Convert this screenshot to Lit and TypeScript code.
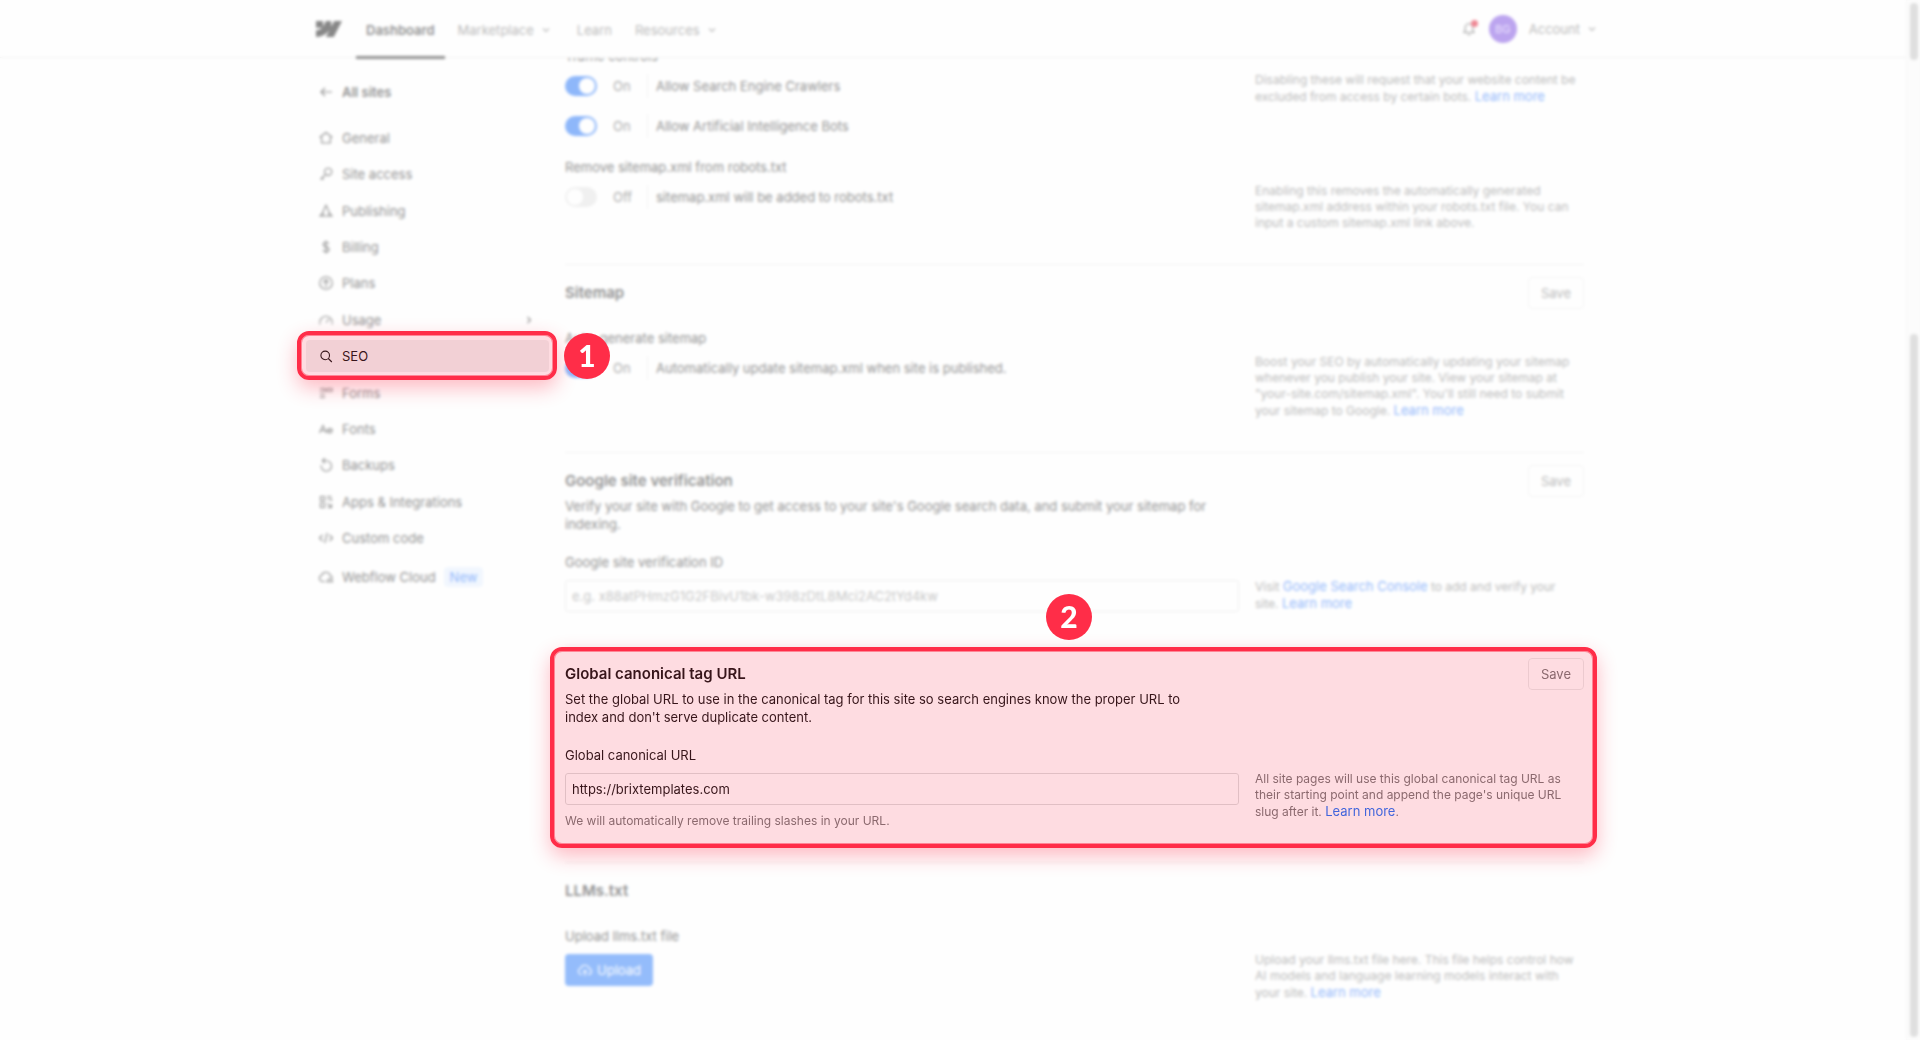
import { LitElement, html, css, svg, nothing } from "lit";
import { customElement, property } from "lit/decorators.js";
import { classMap } from "lit/directives/class-map.js";

const icons: Record<string, unknown> = {
  back: svg`<path d="M14 8H3M7 4 3 8l4 4"/>`,
  general: svg`<path d="M8 2.5 13.8 7 12.300 8V13H3.700V8L2.2 7Z"/>`,
  access: svg`<circle cx="10.2" cy="5.8" r="3.6"/><path d="M7.6 8.4 2.5 13.5M4 12l1.6 1.6"/>`,
  publishing: svg`<path d="M8 2.2 11 8.5V13H5V8.5ZM5 9.5 2 13h3M11 9.5 14 13h-3"/>`,
  billing: svg`<path d="M11 4.8C10.400 3.600 9.300 3.200 8 3.200 6.400 3.200 5.200 4 5.200 5.400 5.200 8.600 11 7 11 10.400 11 12 9.600 12.800 8 12.800 6.500 12.800 5.400 12.200 4.900 11M8 1.500v13"/>`,
  plans: svg`<circle cx="8" cy="8" r="6.300"/><path d="M8 12V5M5.300 7.600 8 4.800l2.700 2.800"/>`,
  usage: svg`<path d="M2 12.500A6.300 6.300 0 1 1 14 12.500M8 10.500 11 7"/>`,
  seo: svg`<circle cx="7.200" cy="7.400" r="4.300"/><path d="m10.300 10.500 3.500 3.500"/>`,
  forms: svg`<path d="M2 3.500h5M2 6.200h5V3.500M9 3.500h5v2.700H9ZM2 9.800h5M2 12.500h5"/>`,
  fonts: svg`<path d="M1.500 12 5 4.500 8.200 12M2.700 9.500h4.600M9.300 9.800h5c0-3-4.800-3-5 0 0 2.600 3.400 2.800 4.700 1.200"/>`,
  backups: svg`<path d="M3.200 8.200A5.200 5.200 0 1 0 8.200 3.800H4.500M7 1.200 4.400 3.800 7 6.400"/>`,
  apps: svg`<path d="M2.500 2.500h4v4h-4ZM9 2.500h4.500M9 5h4.500v2M2.500 9h4v4.500h-4ZM9.300 9.300l4.200 4.200M13.500 10V13.500H9.800"/>`,
  code: svg`<path d="M4.500 5 1.500 8l3 3M11.500 5l3 3-3 3M9.200 3 6.800 13"/>`,
  cloud: svg`<path d="M7 12.500H4.400A3.200 3.200 0 0 1 3.600 6.300 4.500 4.500 0 0 1 12.200 6.500 3.300 3.300 0 0 1 14.500 9.500M9 12.800l2-3h2l1.500 3Z"/>`,
  upload: svg`<path d="M5 12.500H4.400A3.200 3.200 0 0 1 3.600 6.300 4.500 4.500 0 0 1 12.200 6.500 3.100 3.100 0 0 1 11.800 12.500H11M8 14V8.500M6 10.300l2-2 2 2"/>`,
  down: svg`<path d="m5 6.500 3 3 3-3"/>`,
  right: svg`<path d="m6.500 5 3 3-3 3"/>`,
  bell: svg`<path d="M3 11.500h10L11.800 9.500V6.500A3.800 3.800 0 0 0 4.200 6.500V9.500ZM6.500 13.800h3"/>`,
};

const icon = (name: string) => html`<svg
  width="16"
  height="16"
  viewBox="0 0 16 16"
  fill="none"
  stroke="currentColor"
  stroke-width="1.100"
  aria-hidden="true"
>${icons[name]}</svg>`;

const shared = css`
  * {
    box-sizing: border-box;
  }
  a {
    color: inherit;
    text-decoration: none;
  }
  svg {
    display: block;
    flex: none;
  }
  .mark {
    position: absolute;
    border: 4px solid #ff2d48;
    border-radius: 12px;
    background: rgba(255, 45, 72, 0.16);
    box-shadow: 0 8px 20px rgba(255, 45, 72, 0.32), inset 0 0 0 1px rgba(255, 45, 72, 0.5);
    pointer-events: none;
    z-index: 3;
  }
  .badge {
    position: absolute;
    z-index: 4;
    display: grid;
    place-items: center;
    width: 46px;
    height: 46px;
    border-radius: 50%;
    background: #ff2d48;
    color: #fff;
    font: 900 30px/44px Lato, sans-serif;
    align-content: start;
  }
`;

@customElement("top-bar")
export class TopBar extends LitElement {
  static styles = [
    shared,
    css`
      :host {
        display: block;
        position: relative;
        z-index: 1;
        background: #fff;
        border-bottom: 1px solid #e4e4e4;
      }
      .bar {
        display: flex;
        align-items: center;
        height: 57px;
        max-width: 1294px;
        margin: 0 auto;
        padding-left: 10px;
        font-size: 13px;
        color: #757575;
      }
      .logo {
        margin-right: 14px;
        color: #111;
      }
      nav {
        display: flex;
        gap: 3px;
        height: 100%;
      }
      .link {
        display: flex;
        align-items: center;
        gap: 4px;
        height: 59px;
        padding: 0 10px;
      }
      .link.current {
        color: #222;
        font-weight: 600;
        border-bottom: 3px solid #222;
        padding-top: 3px;
      }
      .account {
        display: flex;
        align-items: center;
        gap: 12px;
        margin-left: auto;
      }
      .bell {
        position: relative;
        display: block;
        padding: 0;
        border: 0;
        background: none;
        color: #444;
      }
      .dot {
        position: absolute;
        top: -1px;
        right: -1px;
        width: 7px;
        height: 7px;
        border-radius: 50%;
        background: #e0122c;
      }
      .avatar {
        display: grid;
        place-items: center;
        width: 28px;
        height: 28px;
        border-radius: 50%;
        background: #7a4be0;
        color: #d9c8ff;
        font-size: 11px;
      }
      .menu {
        display: flex;
        align-items: center;
        gap: 4px;
        padding: 0;
        border: 0;
        background: none;
        color: inherit;
        font: inherit;
      }
    `,
  ];

  render() {
    return html`<header class="bar">
      <a class="logo" href="#" aria-label="Webflow">
        <svg width="26" height="26" viewBox="0 0 24 24" fill="currentColor">
          <path
            d="m24 4.515-7.658 14.970H9.149l3.205-6.204h-.144C9.566 16.713 5.621 18.973 0 19.485v-6.118s3.596-.213 5.710-2.435H0V4.515h6.417v5.278l.144-.001 2.622-5.277h4.854v5.244h.144l2.720-5.244H24Z"
          />
        </svg>
      </a>
      <nav>
        <a class="link current" href="#">Dashboard</a>
        <a class="link" href="#">Marketplace ${icon("down")}</a>
        <a class="link" href="#">Learn</a>
        <a class="link" href="#">Resources ${icon("down")}</a>
      </nav>
      <div class="account">
        <button class="bell" aria-label="Notifications">${icon("bell")}<span class="dot"></span></button>
        <span class="avatar">BG</span>
        <button class="menu">Account ${icon("down")}</button>
      </div>
    </header>`;
  }
}

const sideItems = [
  ["general", "General"],
  ["access", "Site access"],
  ["publishing", "Publishing"],
  ["billing", "Billing"],
  ["plans", "Plans"],
  ["usage", "Usage"],
  ["seo", "SEO"],
  ["forms", "Forms"],
  ["fonts", "Fonts"],
  ["backups", "Backups"],
  ["apps", "Apps & Integrations"],
  ["code", "Custom code"],
];

@customElement("side-nav")
export class SideNav extends LitElement {
  static styles = [
    shared,
    css`
      :host {
        display: block;
        padding-top: 18px;
        font-size: 13px;
        color: #222;
      }
      .row {
        display: flex;
        align-items: center;
        gap: 8px;
        height: 32px;
        padding: 0 12px;
        border-radius: 4px;
      }
      .home {
        font-weight: 600;
      }
      .list {
        display: flex;
        flex-direction: column;
        justify-content: space-between;
        min-height: 432px;
        margin: 14px 0 7px;
        padding: 0;
        list-style: none;
      }
      .item.active {
        position: relative;
        z-index: 2;
      }
      .active .row {
        background: #f0f0f0;
        color: #111;
      }
      .more {
        margin-left: auto;
      }
      .item .mark {
        inset: -9px -8px -8px -9px;
      }
      .item .badge {
        top: -7px;
        left: calc(100% + 15px);
      }
      .new {
        padding: 0 6px;
        border-radius: 4px;
        background: #e4efff;
        color: #1f71f7;
        line-height: 20px;
      }
    `,
  ];

  render() {
    return html`<nav>
      <a class="row home" href="#">${icon("back")}All sites</a>
      <ul class="list">
        ${sideItems.map(
          ([id, label]) => html`<li class=${classMap({ item: true, active: id === "seo" })}>
            <a class="row" href="#">
              ${icon(id)}${label}
              ${id === "usage" ? html`<span class="more">${icon("right")}</span>` : nothing}
            </a>
            ${id === "seo" ? html`<span class="mark"></span><span class="badge">1</span>` : nothing}
          </li>`
        )}
      </ul>
      <a class="row" href="#">${icon("cloud")}Webflow Cloud <span class="new">New</span></a>
    </nav>`;
  }
}

@customElement("toggle-row")
export class ToggleRow extends LitElement {
  @property({ type: Boolean }) on = false;
  @property() label = "";

  static styles = [
    shared,
    css`
      :host {
        display: flex;
        align-items: center;
        height: 24px;
      }
      .switch {
        appearance: none;
        display: flex;
        align-items: center;
        width: 32px;
        height: 20px;
        margin: 0;
        padding: 2px;
        border-radius: 10px;
        background: #e2e2e2;
      }
      .switch::before {
        content: "";
        width: 16px;
        height: 16px;
        border-radius: 50%;
        background: #fff;
      }
      .switch:checked {
        justify-content: flex-end;
        background: #1f71f7;
      }
      .state {
        width: 50px;
        padding-left: 16px;
        color: #555;
      }
      .label {
        padding-left: 8px;
        border-left: 1px solid #e4e4e4;
        line-height: 24px;
      }
    `,
  ];

  render() {
    return html`<input class="switch" id="switch" type="checkbox" role="switch" .checked=${this.on} />
      <span class="state">${this.on ? "On" : "Off"}</span>
      <label class="label" for="switch">${this.label}</label>`;
  }
}

@customElement("seo-settings")
export class SeoSettings extends LitElement {
  static styles = [
    shared,
    css`
      :host {
        display: block;
        margin-top: -11px;
        font-size: 13px;
        color: #222;
      }
      .section {
        position: relative;
        padding-bottom: 33px;
      }
      .section + .section {
        padding-top: 12px;
        border-top: 1px solid #e4e4e4;
      }
      .content.lifted {
        position: relative;
        z-index: 2;
        color: #111;
      }
      .head {
        display: flex;
        justify-content: space-between;
        height: 32px;
      }
      .title {
        margin: 0;
        font-size: 15px;
        font-weight: 600;
        line-height: 32px;
      }
      .save {
        height: 32px;
        padding: 0 12px;
        border: 1px solid #e9e9e9;
        border-radius: 4px;
        background: none;
        color: #757575;
        font: inherit;
      }
      .intro {
        max-width: 650px;
        margin: 0;
        line-height: 18px;
      }
      .fields {
        display: grid;
        grid-template-columns: minmax(0, 674fr) minmax(0, 329fr);
        column-gap: 16px;
      }
      .head + .fields,
      .intro + .fields,
      .fields + .fields {
        margin-top: 20px;
      }
      .label {
        display: block;
        margin-bottom: 8px;
        line-height: 19px;
      }
      .toggles {
        display: grid;
        gap: 16px;
      }
      .input {
        display: block;
        width: 100%;
        height: 32px;
        padding: 0 6px;
        border: 1px solid #dcdcdc;
        border-radius: 3px;
        background: none;
        color: inherit;
        font: inherit;
      }
      .input::placeholder {
        color: #8c8c8c;
      }
      .hint,
      .help {
        margin: 0;
        color: #757575;
        font-size: 12px;
        line-height: 16px;
      }
      .hint {
        margin-top: 8px;
      }
      .help {
        padding: 25px 4px 0 0;
      }
      .help a {
        color: #1f71f7;
        font-size: 13px;
      }
      .upload {
        display: flex;
        align-items: center;
        gap: 4px;
        height: 32px;
        padding: 0 12px;
        border: 0;
        border-radius: 4px;
        background: #2b7bf8;
        color: #fff;
        font: inherit;
      }
      .section .mark {
        inset: 1px -13px 14px -15px;
      }
      .section .badge {
        top: -52px;
        left: 47%;
        margin-left: 2px;
      }
    `,
  ];

  render() {
    return html`
      <section class="section">
        <div class="fields">
          <div>
            <span class="label">Traffic controls</span>
            <div class="toggles">
              <toggle-row on label="Allow Search Engine Crawlers"></toggle-row>
              <toggle-row on label="Allow Artificial Intelligence Bots"></toggle-row>
            </div>
          </div>
          <p class="help">
            Disabling these will request that your website content be excluded from access by certain bots.
            <a href="#">Learn more</a>
          </p>
        </div>
        <div class="fields">
          <div>
            <span class="label">Remove sitemap.xml from robots.txt</span>
            <toggle-row label="sitemap.xml will be added to robots.txt"></toggle-row>
          </div>
          <p class="help">
            Enabling this removes the automatically generated sitemap.xml address within your robots.txt file. You can
            input a custom sitemap.xml link above.
          </p>
        </div>
      </section>

      <section class="section">
        <div class="head">
          <h2 class="title">Sitemap</h2>
          <button class="save">Save</button>
        </div>
        <div class="fields">
          <div>
            <span class="label">Auto-generate sitemap</span>
            <toggle-row on label="Automatically update sitemap.xml when site is published."></toggle-row>
          </div>
          <p class="help">
            Boost your SEO by automatically updating your sitemap whenever you publish your site. View your sitemap at
            "your-site.com/sitemap.xml". You'll still need to submit your sitemap to Google. <a href="#">Learn more</a>
          </p>
        </div>
      </section>

      <section class="section">
        <div class="head">
          <h2 class="title">Google site verification</h2>
          <button class="save">Save</button>
        </div>
        <p class="intro">
          Verify your site with Google to get access to your site's Google search data, and submit your sitemap for
          indexing.
        </p>
        <div class="fields">
          <div>
            <label class="label" for="verification">Google site verification ID</label>
            <input class="input" id="verification" placeholder="e.g. x88atPHmzG1G2FBivU1bk-w398zDtL8Mci2AC2tYd4kw" />
          </div>
          <p class="help">
            Visit <a href="#">Google Search Console</a> to add and verify your site. <a href="#">Learn more</a>
          </p>
        </div>
      </section>

      <section class="section">
        <div class="content lifted">
          <div class="head">
            <h2 class="title">Global canonical tag URL</h2>
            <button class="save">Save</button>
          </div>
          <p class="intro">
            Set the global URL to use in the canonical tag for this site so search engines know the proper URL to index
            and don't serve duplicate content.
          </p>
          <div class="fields">
            <div>
              <label class="label" for="canonical">Global canonical URL</label>
              <input class="input" id="canonical" value="https://brixtemplates.com" />
              <p class="hint">We will automatically remove trailing slashes in your URL.</p>
            </div>
            <p class="help">
              All site pages will use this global canonical tag URL as their starting point and append the page's unique
              URL slug after it. <a href="#">Learn more</a>.
            </p>
          </div>
        </div>
        <span class="mark"></span>
        <span class="badge">2</span>
      </section>

      <section class="section">
        <div class="head"><h2 class="title">LLMs.txt</h2></div>
        <div class="fields">
          <div>
            <span class="label">Upload llms.txt file</span>
            <button class="upload">${icon("upload")}Upload</button>
          </div>
          <p class="help">
            Upload your llms.txt file here. This file helps control how AI models and language learning models interact
            with your site. <a href="#">Learn more</a>
          </p>
        </div>
      </section>
    `;
  }
}

@customElement("app-root")
export class AppRoot extends LitElement {
  static styles = [
    shared,
    css`
      :host {
        display: block;
        position: relative;
        overflow: hidden;
        min-height: 100vh;
        background: #fff;
        font-family: Inter, sans-serif;
      }
      .page {
        display: grid;
        grid-template-columns: minmax(0, 1fr) 14px;
      }
      .layout {
        display: grid;
        grid-template-columns: 243px minmax(0, 1fr);
        gap: 16px;
        max-width: 1294px;
        margin: 0 auto;
        padding-right: 16px;
      }
      .track {
        display: flex;
        flex-direction: column;
        justify-content: space-between;
        height: 100vh;
        padding: 3px 2px 3px 3px;
        border-left: 1px solid #f0f0f0;
        background: #fafafa;
      }
      .thumb {
        height: 57px;
        border-radius: 4px;
        background: #c1c1c1;
      }
      .thumb.long {
        height: 68%;
      }
      /* Fades and softens everything that is not lifted above it. */
      .veil {
        position: absolute;
        inset: 0;
        z-index: 1;
        background: rgba(253, 253, 253, 0.5);
        backdrop-filter: blur(0.1rem);
        pointer-events: none;
      }
    `,
  ];

  render() {
    return html`
      <div class="page">
        <div>
          <top-bar></top-bar>
          <main class="layout">
            <side-nav></side-nav>
            <seo-settings></seo-settings>
          </main>
        </div>
        <div class="track">
          <span class="thumb"></span>
          <span class="thumb long"></span>
        </div>
      </div>
      <div class="veil"></div>
    `;
  }
}
